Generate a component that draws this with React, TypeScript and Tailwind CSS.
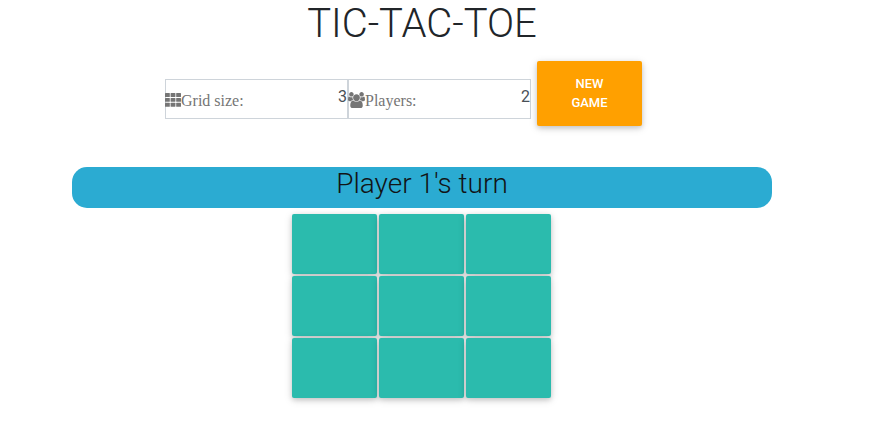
import React from "react";

function GridIcon() {
  return (
    <svg viewBox="0 0 16 14" className="-mt-0.5 h-[14px] w-4 shrink-0 fill-[#757575]">
      {[0, 4.9, 9.8].map((y) =>
        [0, 5.6, 11.2].map((x) => <rect key={`${x}-${y}`} x={x} y={y} width="4.8" height="3.9" rx="0.5" />),
      )}
    </svg>
  );
}

function UsersIcon() {
  return (
    <svg viewBox="0 0 1920 1792" preserveAspectRatio="none" className="-mt-0.5 h-4 w-[17px] shrink-0 fill-[#757575]">
      <path d="M593 896q-162 5-265 128h-134q-82 0-138-40.5t-56-118.5q0-353 124-353 6 0 43.5 21t97.5 42.5 119 21.5q67 0 133-23-5 37-5 66 0 139 81 256zm1071 637q0 120-73 189.5t-194 69.5h-874q-121 0-194-69.5t-73-189.5q0-53 3.5-103.5t14-109 26.5-108.5 43-97.5 62-81 85.5-53.5 111.5-20q10 0 43 21.5t73 48 107 48 135 21.5 135-21.5 107-48 73-48 43-21.5q61 0 111.5 20t85.5 53.5 62 81 43 97.5 26.5 108.5 14 109 3.5 103.5zm-1024-1277q0 106-75 181t-181 75-181-75-75-181 75-181 181-75 181 75 75 181zm704 384q0 159-112.5 271.5t-271.5 112.5-271.5-112.5-112.5-271.5 112.5-271.5 271.5-112.5 271.5 112.5 112.5 271.5zm576 225q0 78-56 118.5t-138 40.5h-134q-103-123-265-128 81-117 81-256 0-29-5-66 66 23 133 23 59 0 119-21.5t97.5-42.5 43.5-21q124 0 124 353zm-128-609q0 106-75 181t-181 75-181-75-75-181 75-181 181-75 181 75 75 181z" />
    </svg>
  );
}

interface FieldProps {
  icon: React.ReactNode;
  label: string;
  value: number;
}

function Field({ icon, label, value }: FieldProps) {
  return (
    <div className="flex h-10 w-[183px] justify-between border border-[#ced4da]">
      <div className="-ml-px flex h-[42px] items-center text-[#757575]">
        {icon}
        <span className="font-['Liberation_Serif',serif] text-base leading-6">{label}</span>
      </div>
      <span className="pt-[5px] text-base leading-6 text-[#495057]">{value}</span>
    </div>
  );
}

const raised = "shadow-[0_2px_5px_0_rgba(0,0,0,0.16),0_2px_10px_0_rgba(0,0,0,0.12)]";

export default function App() {
  return (
    <main className="flex h-[431px] w-[844px] flex-col items-center bg-white font-['Roboto',sans-serif]">
      <h1 className="h-[61px] text-[40px] leading-[48px] font-light text-[#212529]">TIC-TAC-TOE</h1>

      <div className="flex h-[106px] w-[514px] items-start">
        <div className="mt-[18px] flex">
          <Field icon={<GridIcon />} label="Grid size:" value={3} />
          <Field icon={<UsersIcon />} label="Players:" value={2} />
        </div>
        <button
          className={`ml-1.5 h-[65px] w-[105px] rounded-[2px] bg-[#ffa000] px-6 pb-0.5 text-[13px] leading-[19px] font-medium text-white ${raised}`}
        >
          NEW GAME
        </button>
      </div>

      <div className="h-[41px] w-[700px] rounded-[15px] bg-[#2babd2] text-center text-[28px] leading-[33.6px] font-light text-[#121416]">
        Player 1's turn
      </div>

      <div className="mt-1.5 mr-px grid grid-cols-3 gap-0.5">
        {Array.from({ length: 9 }, (_, i) => (
          <button key={i} className={`h-[60px] w-[85px] rounded-[2px] bg-[#2bbbad] ${raised}`} />
        ))}
      </div>
    </main>
  );
}
